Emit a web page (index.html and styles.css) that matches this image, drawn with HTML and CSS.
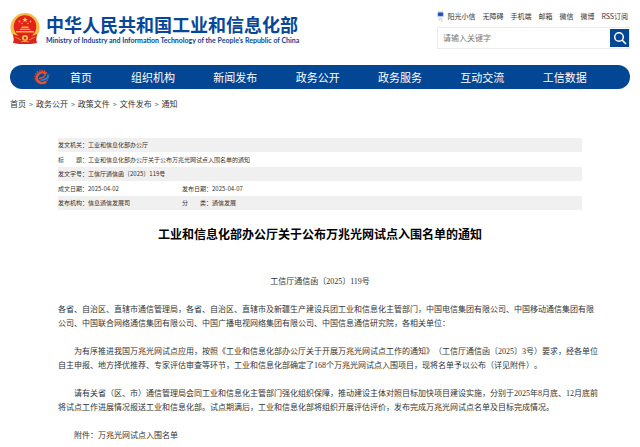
FILE: index.html
```html
<!DOCTYPE html>
<html lang="zh-CN">
<head>
<meta charset="utf-8">
<meta name="viewport" content="width=device-width, initial-scale=1">
<title>工业和信息化部办公厅关于公布万兆光网试点入围名单的通知</title>
<link rel="stylesheet" href="styles.css">
</head>
<body>
<header class="header">
  <a class="brand" href="#">
    <svg class="emblem" viewBox="0 0 30 32" aria-hidden="true">
      <path d="M5 22 3 30l6 1h12l6-1-2-8z" fill="#d9251c"/>
      <circle cx="15" cy="14.500" r="14.500" fill="#f3bd45"/>
      <circle cx="15" cy="13.500" r="11.300" fill="#e3231b"/>
      <path d="m15 4 .8 2h2l-1.600 1.300.6 2-1.800-1.200-1.800 1.200.6-2L12.200 6h2z" fill="#f8d257"/>
      <g fill="#f5b545"><circle cx="9.500" cy="8.500" r=".9"/><circle cx="20.500" cy="8.500" r=".9"/><circle cx="12" cy="10.500" r=".8"/><circle cx="18" cy="10.500" r=".8"/>
      <path d="M11 15l1-1.500h6l1 1.500zM9.500 17l1-1.300h9l1 1.300zM6 19.500V18h18v1.500z"/></g>
      <path d="M3 21c4 2 7 2 9 1l3-1 3 1c2 1 5 1 9-1l-1 7-7 1-4-1-4 1-7-1z" fill="#d9251c"/>
      <circle cx="15" cy="25" r="3" fill="#f3bd45"/><circle cx="15" cy="25" r="1.200" fill="#d9251c"/>
      <path d="m5 24 6 3m14-3-6 3m-8 2 4-1 4 1" stroke="#f0a53c" stroke-width=".8" fill="none"/>
    </svg>
    <span class="brand-text">
      <strong class="brand-name">中华人民共和国工业和信息化部</strong>
      <span class="brand-en" lang="en">Ministry of Industry and Information Technology of the People's Republic of China</span>
    </span>
  </a>
  <div class="tools">
    <nav class="quick" aria-label="快捷入口">
      <a class="assistant" href="#"><svg class="robot" viewBox="0 0 7 12" aria-hidden="true"><path d="M1 1h1M5 1h1M1 10h2M4 11h2" stroke="#e9cf7b"/><rect x="0" y="1.500" width="7" height="6" rx="2.500" fill="#b7cdf4"/><rect x="1" y="2.500" width="5" height="3.500" rx="1" fill="#2450bd"/><path d="M2 8h3v2H2z" fill="#d5def0"/></svg>阳光小信</a>
      <a href="#">无障碍</a><a href="#">手机端</a><a href="#">邮箱</a><a href="#">微信</a><a href="#">微博</a><a href="#">RSS订阅</a>
    </nav>
    <form class="search">
      <input class="search-input" type="text" placeholder="请输入关键字" aria-label="请输入关键字">
      <button class="search-button" type="button" aria-label="搜索"><svg viewBox="0 0 14 14" width="14" height="14" aria-hidden="true"><circle cx="6" cy="6" r="4.300" fill="none" stroke="#fff" stroke-width="1.500"/><path d="m9 9 4 4" stroke="#fff" stroke-width="1.700"/></svg></button>
    </form>
  </div>
</header>

<nav class="nav" aria-label="主导航">
  <a class="nav-home" href="#"><svg class="nav-logo" viewBox="0 0 16 16" aria-hidden="true"><circle cx="7.500" cy="8" r="6.400" fill="none" stroke="#d94b2b" stroke-width="1.500" stroke-dasharray="1.500 1" pathLength="40"/><path d="M12 12.500A5.300 5.300 0 1 1 12 5" fill="none" stroke="#e5502d" stroke-width="2.600"/><path d="M5.500 10.500c4 0 8-2 10-6 .5 4-4 7.500-8.500 7.500z" fill="#2b86cf"/><path d="M5 9.200c3.500 0 5.500-1 6.500-3.700" fill="none" stroke="#e5502d" stroke-width="1.600"/></svg>首页</a>
  <a href="#">组织机构</a>
  <a href="#">新闻发布</a>
  <a href="#">政务公开</a>
  <a href="#">政务服务</a>
  <a href="#">互动交流</a>
  <a href="#">工信数据</a>
</nav>

<nav class="crumbs" aria-label="当前位置">
  <a href="#">首页</a><span class="sep">&gt;</span><a href="#">政务公开</a><span class="sep">&gt;</span><a href="#">政策文件</a><span class="sep">&gt;</span><a href="#">文件发布</a><span class="sep">&gt;</span><a href="#">通知</a>
</nav>

<main class="article">
  <table class="meta">
    <colgroup><col class="col-label"><col class="col-value"><col class="col-label"><col></colgroup>
    <tr><th scope="row">发文机关：</th><td colspan="3">工业和信息化部办公厅</td></tr>
    <tr><th scope="row">标　　题：</th><td colspan="3">工业和信息化部办公厅关于公布万兆光网试点入围名单的通知</td></tr>
    <tr><th scope="row">发文字号：</th><td colspan="3">工信厅通信函〔2025〕119号</td></tr>
    <tr><th scope="row">成文日期：</th><td>2025-04-02</td><th scope="row">发布日期：</th><td>2025-04-07</td></tr>
    <tr><th scope="row">发布机构：</th><td>信息通信发展司</td><th scope="row">分　　类：</th><td>通信发展</td></tr>
  </table>
  <h1 class="title">工业和信息化部办公厅关于公布万兆光网试点入围名单的通知</h1>
  <div class="content">
    <p class="number">工信厅通信函〔2025〕119号</p>
    <p>各省、自治区、直辖市通信管理局，各省、自治区、直辖市及新疆生产建设兵团工业和信息化主管部门，中国电信集团有限公司、中国移动通信集团有限<br>公司、中国联合网络通信集团有限公司、中国广播电视网络集团有限公司、中国信息通信研究院，各相关单位：</p>
    <p class="indent">为有序推进我国万兆光网试点应用，按照《工业和信息化部办公厅关于开展万兆光网试点工作的通知》（工信厅通信函〔2025〕3号）要求，经各单位<br>自主申报、地方择优推荐、专家评估审查等环节，工业和信息化部确定了168个万兆光网试点入围项目，现将名单予以公布（详见附件）。</p>
    <p class="indent">请有关省（区、市）通信管理局会同工业和信息化主管部门强化组织保障，推动建设主体对照目标加快项目建设实施，分别于2025年8月底、12月底前<br>将试点工作进展情况报送工业和信息化部。试点期满后，工业和信息化部将组织开展评估评价，发布完成万兆光网试点名单及目标完成情况。</p>
    <p class="indent">附件：万兆光网试点入围名单</p>
  </div>
</main>
</body>
</html>
```
FILE: styles.css
```css
* { box-sizing: border-box; }

body {
  margin: 0;
  background: #fff;
  color: #333;
  font-family: "Noto Sans CJK SC", sans-serif;
  font-size: 8px;
  line-height: 14px;
  text-spacing-trim: space-all;
}

a { color: inherit; text-decoration: none; }

.header {
  display: flex;
  justify-content: space-between;
  align-items: flex-start;
  height: 65px;
  padding: 10px 10px 0;
}

.brand {
  display: flex;
  gap: 6px;
  padding-top: 3px;
  color: #07479a;
}

.emblem { width: 30px; height: 32px; }

.brand-text {
  display: flex;
  flex-direction: column;
  white-space: nowrap;
}

.brand-name {
  font-size: 18px;
  line-height: 23px;
  font-weight: 700;
}

.brand-en {
  font-family: Lato, sans-serif;
  font-size: 7px;
  line-height: 8px;
  font-weight: 700;
}

.tools { width: 193px; }

.quick {
  display: flex;
  justify-content: flex-end;
  gap: 7px;
  padding-right: 2px;
  font-size: 7px;
  line-height: 12px;
  white-space: nowrap;
}

.assistant { display: flex; gap: 3px; }

.robot { width: 7px; height: 12px; }

.search {
  display: flex;
  height: 22px;
  margin-top: 5px;
  padding: 1px 0;
  border: 1px solid #ebebeb;
}

.search-input {
  flex: 1;
  min-width: 0;
  border: 0;
  padding: 0 5px;
  outline: 0;
  background: transparent;
  font: inherit;
}

.search-input::placeholder { color: #777; }

.search-button {
  display: flex;
  align-items: center;
  justify-content: center;
  width: 19px;
  padding: 0;
  border: 0;
  background: #034694;
}

.nav {
  display: grid;
  grid-template-columns: 121px repeat(6, 1fr);
  margin: 0 10px;
  padding-right: 5px;
  border-radius: 12px;
  background: #034694;
  color: #fff;
  font-size: 11px;
  line-height: 24px;
}

.nav-home {
  display: flex;
  align-items: center;
  gap: 20px;
  padding-left: 24px;
}

.nav-logo { width: 16px; height: 16px; }

.crumbs {
  display: flex;
  gap: 3px;
  padding: 8px 10px 0;
}

.sep { color: #3c7098; font-size: 7px; }

.article { padding: 27px 40px 0 58px; }

.meta {
  width: calc(100% - 18px);
  border-collapse: collapse;
  table-layout: fixed;
  font-size: 6px;
}

.meta tr { height: 15px; }
.meta tr:nth-child(odd) { height: 14px; background: #f0f0f0; }
.meta th, .meta td { padding: 0; text-align: left; font-weight: 400; }
.col-label { width: 30px; }
.col-value { width: 94px; }

.title {
  margin: 15px 18px 32px 0;
  color: #000;
  font-size: 12px;
  line-height: 18px;
  font-weight: 700;
  text-align: center;
}

.content { font-family: "Liberation Serif", "Noto Sans CJK SC", serif; }
.content p { margin: 0 0 14px; }
.content .indent { text-indent: 2em; }
.content .number { margin-right: 18px; text-align: center; }
```
